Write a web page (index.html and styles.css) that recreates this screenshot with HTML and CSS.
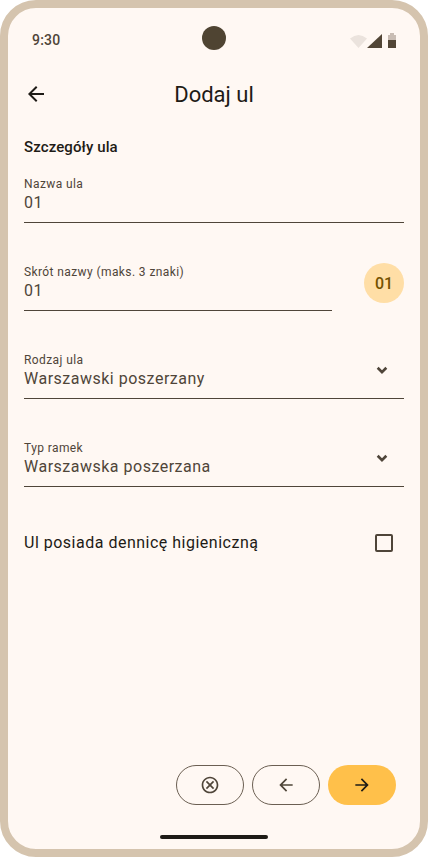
FILE: index.html
```html
<!DOCTYPE html>
<html lang="pl">
<head>
<meta charset="utf-8">
<title>Dodaj ul</title>
<link rel="stylesheet" href="styles.css">
</head>
<body>
<div class="device">
  <div class="status">
    <span class="time">9:30</span>
    <span class="camera"></span>
    <span class="status-icons">
      <svg width="17" height="14" viewBox="0 0 17 14"><path d="M0 4.5 Q8.5 -2.5 17 4.5 L8.5 14Z" fill="#ebe3dd"/></svg>
      <svg width="15" height="14" viewBox="0 0 15 14"><path d="M15 0V14H0Z" fill="#524636"/></svg>
      <svg width="8" height="15" viewBox="0 0 8 15"><path d="M0 2H2V0H6V2H8V7H0Z" fill="#c9bdb4"/><rect y="7" width="8" height="8" fill="#524636"/></svg>
    </span>
  </div>
  <header class="appbar">
    <svg class="back" width="24" height="24" viewBox="0 0 24 24"><path d="M20 11H7.83l5.59-5.59L12 4l-8 8 8 8 1.41-1.41L7.83 13H20z" fill="#1e1b16"/></svg>
    <h1>Dodaj ul</h1>
  </header>
  <main class="content">
    <h2>Szczegóły ula</h2>
    <div class="field">
      <label>Nazwa ula</label>
      <div class="value">01</div>
    </div>
    <div class="field-row">
      <div class="field short">
        <label>Skrót nazwy (maks. 3 znaki)</label>
        <div class="value">01</div>
      </div>
      <div class="badge">01</div>
    </div>
    <div class="field select">
      <label>Rodzaj ula</label>
      <div class="value">Warszawski poszerzany</div>
      <svg class="chevron" width="20" height="20" viewBox="0 0 24 24"><path d="M6.8 9.3 12 14.5l5.2-5.2" fill="none" stroke="#4f4539" stroke-width="3.2"/></svg>
    </div>
    <div class="field select">
      <label>Typ ramek</label>
      <div class="value">Warszawska poszerzana</div>
      <svg class="chevron" width="20" height="20" viewBox="0 0 24 24"><path d="M6.8 9.3 12 14.5l5.2-5.2" fill="none" stroke="#4f4539" stroke-width="3.2"/></svg>
    </div>
    <div class="check-row">
      <span>Ul posiada dennicę higieniczną</span>
      <span class="checkbox"></span>
    </div>
  </main>
  <div class="actions">
    <button class="btn outline" type="button" aria-label="Anuluj">
      <svg width="20" height="20" viewBox="0 0 24 24"><path d="M12 2C6.47 2 2 6.47 2 12s4.47 10 10 10 10-4.47 10-10S17.53 2 12 2zm0 18c-4.41 0-8-3.59-8-8s3.59-8 8-8 8 3.59 8 8-3.59 8-8 8zm3.59-13L12 10.59 8.41 7 7 8.41 10.59 12 7 15.59 8.41 17 12 13.41 15.59 17 17 15.59 13.41 12 17 8.41z" fill="#4f4539"/></svg>
    </button>
    <button class="btn outline" type="button" aria-label="Wstecz">
      <svg width="20" height="20" viewBox="0 0 24 24"><path d="M20 11H7.83l5.59-5.59L12 4l-8 8 8 8 1.41-1.41L7.83 13H20z" fill="#4f4539"/></svg>
    </button>
    <button class="btn filled" type="button" aria-label="Dalej">
      <svg width="20" height="20" viewBox="0 0 24 24"><path d="M12 4l-1.41 1.41L16.17 11H4v2h12.17l-5.58 5.59L12 20l8-8z" fill="#1e1b16"/></svg>
    </button>
  </div>
  <div class="home-wrap"><span class="home"></span></div>
</div>
</body>
</html>
```
FILE: styles.css
```css
* { box-sizing: border-box; }
html, body { margin: 0; padding: 0; background: #fff; }
body { width: 428px; height: 857px; overflow: hidden; font-family: Roboto, "Noto Sans", sans-serif; color: #1e1b16; }
.device {
  width: 428px; height: 857px;
  border: 8px solid #d5c4ae;
  border-radius: 36px;
  background: #fff8f3;
  display: flex; flex-direction: column;
  padding: 0 16px;
}
.status { position: relative; height: 60px; flex: none; display: flex; align-items: center; justify-content: space-between; padding: 4px 8px 0; }
.time { font-size: 14px; font-weight: 500; color: #4f4539; letter-spacing: 0.2px; }
.camera { position: absolute; left: 178px; top: 18px; width: 24px; height: 24px; border-radius: 50%; background: #4f4432; }
.status-icons { display: flex; align-items: flex-end; }
.status-icons svg { display: block; }
.status-icons svg:last-child { margin-left: 6px; }
.appbar { position: relative; height: 52px; flex: none; display: flex; align-items: center; justify-content: center; padding-top: 1px; }
.back { position: absolute; left: 0; top: 14px; }
h1 { margin: 0; font-size: 22px; font-weight: 400; color: #1e1b16; line-height: 28px; }
.content { flex: 1; display: flex; flex-direction: column; }
h2 { margin: 17px 0 10px; font-size: 15px; font-weight: 500; line-height: 20px; color: #1e1b16; height: 20px; letter-spacing: 0.1px; }
.field { position: relative; height: 56px; border-bottom: 1px solid #4f4539; padding-top: 9px; margin-bottom: 32px; }
.field label { display: block; font-size: 12px; line-height: 16px; color: #4f4539; letter-spacing: 0.4px; }
.value { font-size: 16px; line-height: 24px; letter-spacing: 0.5px; color: #4f4539; margin-top: -1px; }
.field-row { display: flex; justify-content: space-between; align-items: flex-start; }
.field.short { width: 308px; }
.badge { width: 40px; height: 40px; margin-top: 8px; border-radius: 50%; background: #ffdea6; color: #755200; font-size: 16px; font-weight: 500; display: flex; align-items: center; justify-content: center; }
.chevron { position: absolute; right: 12px; top: 17px; }
.check-row { display: flex; justify-content: space-between; align-items: center; height: 24px; margin-top: 11px; font-size: 16px; letter-spacing: 0.5px; color: #1e1b16; padding-right: 11px; }
.checkbox { width: 18px; height: 18px; border: 2px solid #4f4539; border-radius: 2px; margin-top: 2px; }
.actions { display: flex; justify-content: flex-end; gap: 8px; padding-right: 8px; flex: none; }
.btn { width: 68px; height: 40px; border-radius: 20px; padding: 0; display: flex; align-items: center; justify-content: center; background: transparent; border: 1px solid #6b5f52; }
.btn.filled { background: #ffc04a; border: 0; }
.home-wrap { height: 44px; flex: none; display: flex; justify-content: center; padding-top: 30px; }
.home { width: 108px; height: 4px; border-radius: 2px; background: #1e1b16; }
```
